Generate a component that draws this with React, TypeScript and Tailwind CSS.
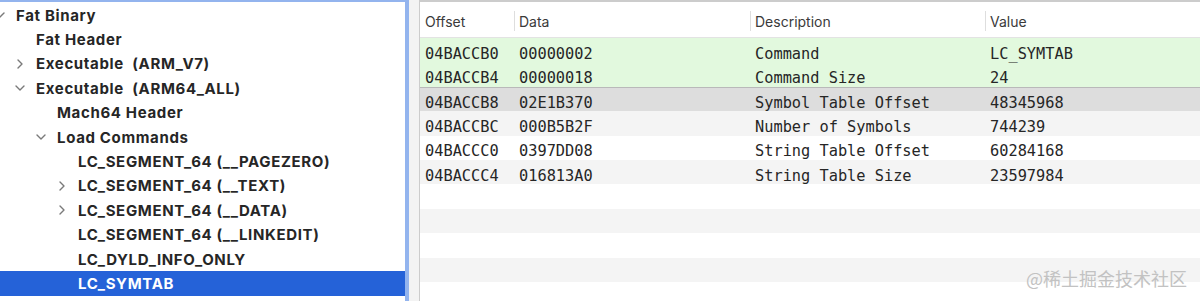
import React from "react";

type Node = { label: string; level: number; chev?: "down" | "right"; selected?: boolean };

const tree: Node[] = [
  { label: "Fat Binary", level: 0, chev: "down" },
  { label: "Fat Header", level: 1 },
  { label: "Executable  (ARM_V7)", level: 1, chev: "right" },
  { label: "Executable  (ARM64_ALL)", level: 1, chev: "down" },
  { label: "Mach64 Header", level: 2 },
  { label: "Load Commands", level: 2, chev: "down" },
  { label: "LC_SEGMENT_64 (__PAGEZERO)", level: 3 },
  { label: "LC_SEGMENT_64 (__TEXT)", level: 3, chev: "right" },
  { label: "LC_SEGMENT_64 (__DATA)", level: 3, chev: "right" },
  { label: "LC_SEGMENT_64 (__LINKEDIT)", level: 3 },
  { label: "LC_DYLD_INFO_ONLY", level: 3 },
  { label: "LC_SYMTAB", level: 3, selected: true },
];

const indentClass = ["ml-[-6px]", "pl-[14px]", "pl-[35px]", "pl-[56px]"];

type Row = { off: string; data: string; desc: string; val: string } | null;

const rows: Row[] = [
  { off: "04BACCB0", data: "00000002", desc: "Command", val: "LC_SYMTAB" },
  { off: "04BACCB4", data: "00000018", desc: "Command Size", val: "24" },
  { off: "04BACCB8", data: "02E1B370", desc: "Symbol Table Offset", val: "48345968" },
  { off: "04BACCBC", data: "000B5B2F", desc: "Number of Symbols", val: "744239" },
  { off: "04BACCC0", data: "0397DD08", desc: "String Table Offset", val: "60284168" },
  { off: "04BACCC4", data: "016813A0", desc: "String Table Size", val: "23597984" },
  null,
  null,
  null,
  null,
  null,
];

function Chevron({ dir }: { dir: "down" | "right" }) {
  return (
    <svg width="12" height="12" viewBox="0 0 12 12" className="shrink-0">
      {dir === "right" ? (
        <polyline points="4,2 8,6 4,10" fill="none" stroke="#7a7a7a" strokeWidth="1.4" strokeLinecap="round" strokeLinejoin="round" />
      ) : (
        <polyline points="2,4 6,8 10,4" fill="none" stroke="#7a7a7a" strokeWidth="1.4" strokeLinecap="round" strokeLinejoin="round" />
      )}
    </svg>
  );
}

function rowBg(i: number) {
  if (i === 0 || i === 1) return "bg-[#e2f9de]";
  if (i === 2) return "bg-[#dddddd] border-t border-[#b9b9b9]";
  if (i % 2 === 1) return "bg-[#f4f4f4]";
  return "bg-white";
}

export default function App() {
  return (
    <div className="relative flex w-[1200px] h-[301px] overflow-hidden bg-white">
      {/* Left outline pane */}
      <div className="w-[409px] h-full shrink-0 border-t-2 border-r-4 border-[#93b4ee] bg-white pt-[1px] font-['Inter',sans-serif] text-[15px] font-bold tracking-[0.65px] text-[#262626]">
        {tree.map((n, i) => (
          <div
            key={i}
            className={`h-[24.4px] flex items-center ${n.selected ? "bg-[#2562d8] text-white" : ""}`}
          >
            <div className={`flex items-center ${indentClass[n.level]}`}>
              <div className="w-[12px] flex items-center justify-center">
                {n.chev ? <Chevron dir={n.chev} /> : null}
              </div>
              <span className="ml-[10px] whitespace-pre leading-none">{n.label}</span>
            </div>
          </div>
        ))}
      </div>

      {/* splitter */}
      <div className="w-[10px] h-full shrink-0 bg-[#f3f3f3]" />

      {/* Right table pane */}
      <div className="flex-1 h-full border-l border-t-2 border-[#cccccc] bg-white">
        <div className="h-[36px] flex items-center pt-[3px] border-b border-[#e3e3e3] font-['Inter',sans-serif] text-[14px] text-[#3a3a3a]">
          <div className="w-[94px] pl-[5px]">Offset</div>
          <div className="w-[236px] h-[20px] flex items-center border-l border-[#dedede] pl-[4px]">Data</div>
          <div className="w-[235px] h-[20px] flex items-center border-l border-[#dedede] pl-[4px]">Description</div>
          <div className="flex-1 h-[20px] flex items-center border-l border-[#dedede] pl-[4px]">Value</div>
        </div>
        <div className="font-['DejaVu_Sans_Mono',monospace] text-[15.3px] text-[#262626]">
          {rows.map((r, i) => (
            <div key={i} className={`h-[24.4px] flex items-center pt-[8px] ${rowBg(i)}`}>
              {r ? (
                <>
                  <div className="w-[94px] pl-[5px] whitespace-pre leading-none">{r.off}</div>
                  <div className="w-[236px] pl-[5px] whitespace-pre leading-none">{r.data}</div>
                  <div className="w-[235px] pl-[5px] whitespace-pre leading-none">{r.desc}</div>
                  <div className="flex-1 pl-[5px] whitespace-pre leading-none">{r.val}</div>
                </>
              ) : null}
            </div>
          ))}
        </div>
      </div>

      {/* watermark */}
      <div className="absolute right-[13px] top-[269px] text-[18px] leading-none text-[#c2c2c2] font-['Noto_Sans_CJK_SC',sans-serif]">
        @稀土掘金技术社区
      </div>
    </div>
  );
}
